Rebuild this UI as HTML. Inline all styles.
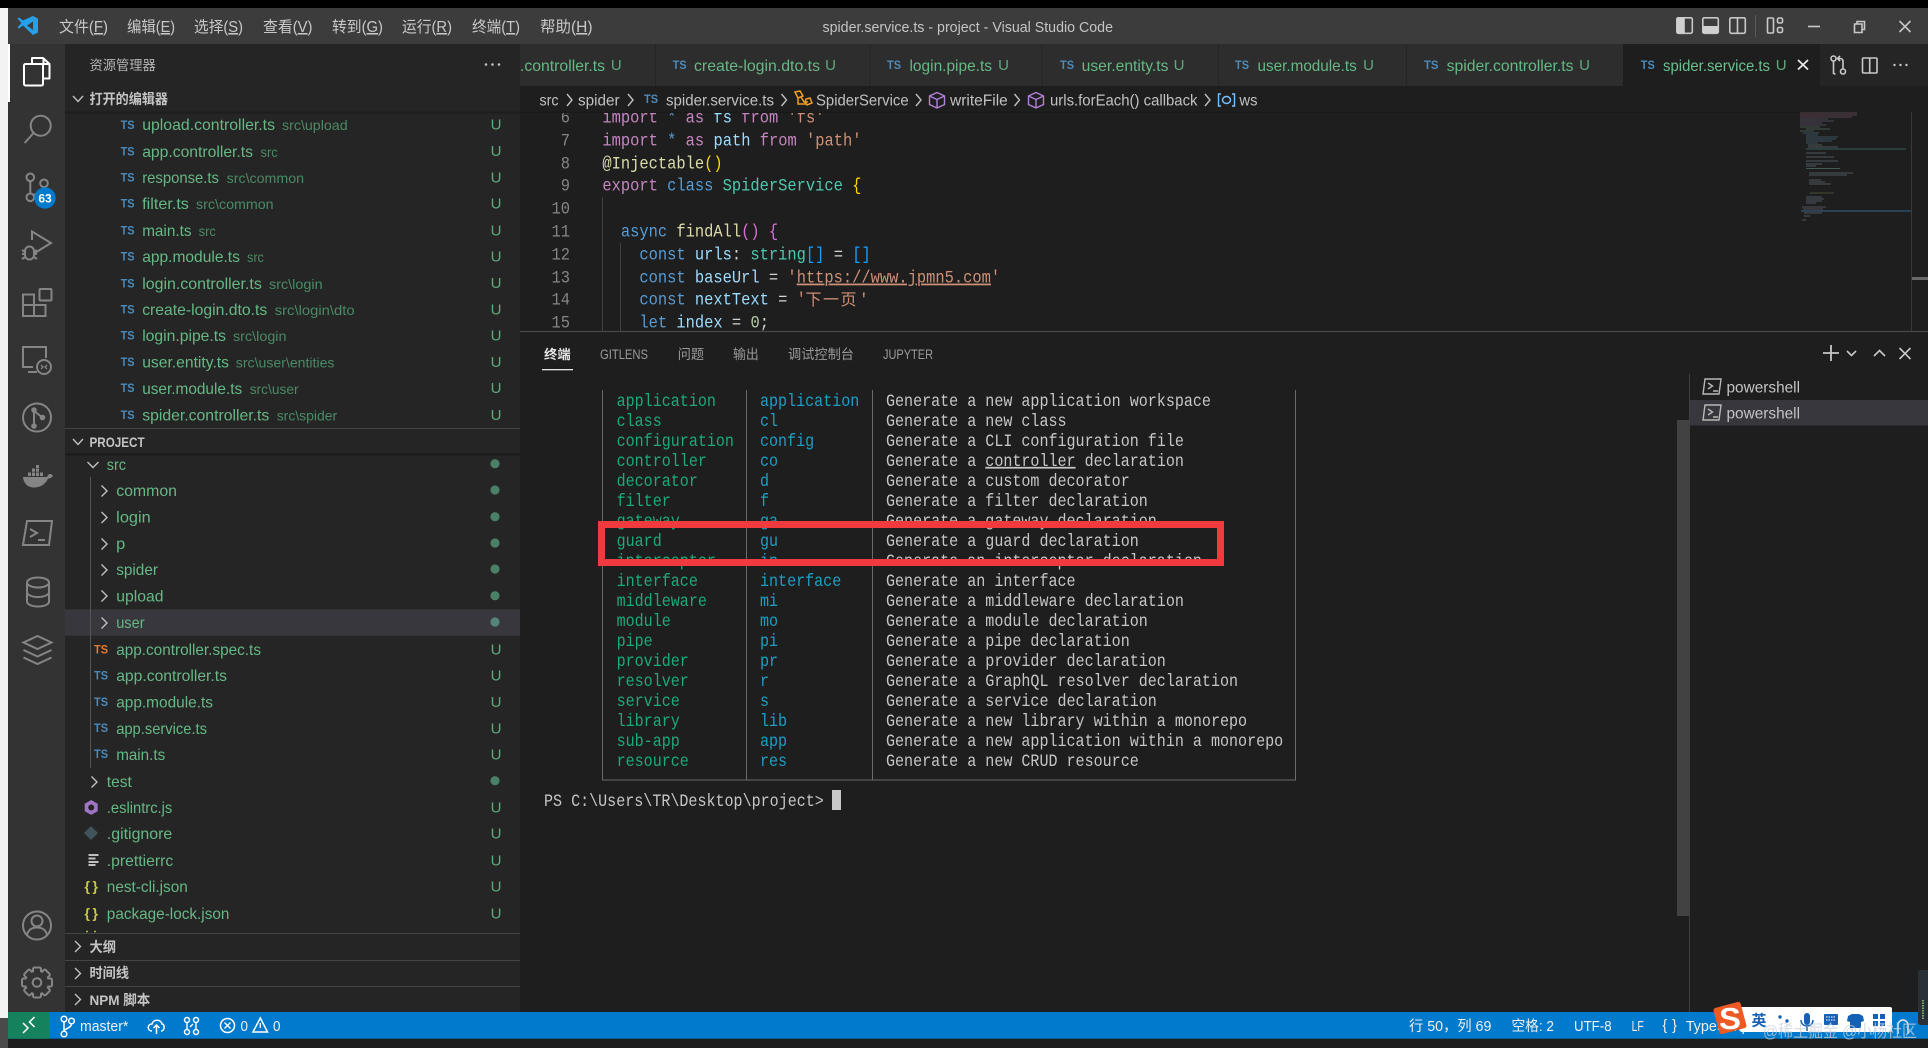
<!DOCTYPE html>
<html lang="zh-CN"><head><meta charset="utf-8"><title>spider.service.ts - project - Visual Studio Code</title>
<style>
html,body{margin:0;padding:0;background:#1e1e1e;width:1928px;height:1048px;overflow:hidden}
svg{display:block;filter:blur(.3px)}
text{white-space:pre;font-family:"Liberation Sans","Noto Sans CJK SC",sans-serif}
.m{font-size:15.5px;fill:#c8c8c8}
.n{font-size:16px;fill:#66b884}
.t{font-size:16px;fill:#66b884}
.p{font-size:14px;fill:#4a8a64}
.u{font-size:15px;fill:#5fa97d;text-anchor:middle}
.ts{font-size:11.5px;font-weight:700;fill:#4d8ab8}
.h{font-size:14px;font-weight:700;fill:#c4c4c4}
.b{font-size:15.5px;fill:#c0c0c0}
.pt{font-size:13.5px;fill:#9a9a9a}
.s{font-size:14.5px;fill:#f0f0f0}
.c text{font-family:"Liberation Mono","Noto Sans CJK SC",monospace;font-size:17.5px}
.g{fill:#1aab78}.y{fill:#1c9fc6}.d{fill:#c6c6c6}
.pu{fill:#c586c0}.bl{fill:#569cd6}.lb{fill:#9cdcfe}.or{fill:#ce9178}.ye{fill:#dcdcaa}.te{fill:#4ec9b0}.wh{fill:#d4d4d4}
.gd{fill:#ffd700}.vi{fill:#da70d6}.br{fill:#179fff}.nu{fill:#b5cea8}.ln{fill:#858585}
.i{fill:none;stroke:#858585;stroke-width:2}
.ch{fill:none;stroke:#c0c0c0;stroke-width:1.4}
.w{fill:none;stroke:#c8c8c8;stroke-width:1.6}
</style></head><body>
<svg xmlns="http://www.w3.org/2000/svg" width="1928" height="1048" viewBox="0 0 1928 1048">
<!-- base -->
<rect width="1928" height="1048" fill="#1e1e1e"/>
<rect x="0" y="0" width="8" height="1018" fill="#f3f3f3"/>
<rect x="0" y="1018" width="8" height="30" fill="#4a4a4a"/>
<rect width="1928" height="8" fill="#000"/>
<rect x="8" y="8" width="1920" height="36" fill="#3c3c3c"/>
<rect x="8" y="44" width="57" height="968" fill="#333"/>
<rect x="65" y="44" width="455" height="968" fill="#252526"/>
<rect x="8" y="44" width="2" height="58" fill="#fff"/>

<!-- title bar -->
<path fill="#23a0ee" d="M33 16l5 2.500v14l-5 2.500-10-9.500-4 3-1.500-1 4-4.500-4-4.500 1.500-1 4 3z"/>
<path fill="#3c3c3c" d="M33 21.500l-6 4 6 4.500z"/>
<text class="m" x="59" y="32" textLength="49" lengthAdjust="spacingAndGlyphs">文件(<tspan text-decoration="underline">F</tspan>)</text>
<text class="m" x="127" y="32" textLength="48" lengthAdjust="spacingAndGlyphs">编辑(<tspan text-decoration="underline">E</tspan>)</text>
<text class="m" x="194" y="32" textLength="49" lengthAdjust="spacingAndGlyphs">选择(<tspan text-decoration="underline">S</tspan>)</text>
<text class="m" x="263" y="32" textLength="49.500" lengthAdjust="spacingAndGlyphs">查看(<tspan text-decoration="underline">V</tspan>)</text>
<text class="m" x="332" y="32" textLength="51" lengthAdjust="spacingAndGlyphs">转到(<tspan text-decoration="underline">G</tspan>)</text>
<text class="m" x="402" y="32" textLength="50" lengthAdjust="spacingAndGlyphs">运行(<tspan text-decoration="underline">R</tspan>)</text>
<text class="m" x="472" y="32" textLength="48" lengthAdjust="spacingAndGlyphs">终端(<tspan text-decoration="underline">T</tspan>)</text>
<text class="m" x="540" y="32" textLength="52.500" lengthAdjust="spacingAndGlyphs">帮助(<tspan text-decoration="underline">H</tspan>)</text>
<text x="822.500" y="32" textLength="290.500" lengthAdjust="spacingAndGlyphs" style="font-size:14.500px;fill:#c4c4c4">spider.service.ts - project - Visual Studio Code</text>
<rect x="1676.800" y="17.800" width="15.500" height="15.500" rx="1.500" class="w"/><rect x="1676.800" y="17.800" width="8" height="15.500" fill="#d0d0d0"/>
<rect x="1702.800" y="17.800" width="15.500" height="15.500" rx="1.500" class="w"/><rect x="1702.800" y="26" width="15.500" height="7.300" fill="#d0d0d0"/>
<rect x="1729.800" y="17.800" width="15.500" height="15.500" rx="1.500" class="w"/><path d="M1737.500 18v15" class="w"/>
<path d="M1755.500 15v22" stroke="#5a5a5a" stroke-width="1"/>
<rect x="1767.500" y="18" width="6" height="15" rx="1" class="w"/><rect x="1777.500" y="18" width="5" height="5" rx="1.500" class="w"/><rect x="1777.500" y="27.500" width="5" height="5" rx="1.500" class="w"/>
<path d="M1808 26.500h12" class="w"/>
<path d="M1857 24v-2.500h7.500v8h-2.500M1854.500 24h7.500v8.500h-7.500z" class="w"/>
<path d="M1899.500 21l11 11M1910.500 21l-11 11" class="w"/>

<!-- activity bar icons -->
<g fill="none" stroke="#fff" stroke-width="2" stroke-linejoin="round">
<path d="M32 64v-6h11l6.500 6v14.500H43"/><path d="M43.500 58v6h6"/><rect x="24" y="64" width="19" height="21.500" rx="1.500"/>
</g>
<circle cx="40.700" cy="125.700" r="10" class="i"/><path d="M33.500 133L24.700 143" class="i"/>
<circle cx="30.300" cy="177.300" r="3.800" class="i"/><circle cx="44" cy="183.300" r="3.800" class="i"/><circle cx="30.300" cy="197.300" r="3.800" class="i"/>
<path d="M30.300 181v12.500M44 187c0 4-6 6-10.500 8" class="i"/>
<circle cx="45" cy="198" r="10.700" fill="#007acc"/>
<text x="45" y="202.500" text-anchor="middle" style="font-size:12px;font-weight:700;fill:#fff">63</text>
<path d="M32 240v-8.500l19 11.500-17 10.500" class="i"/>
<path d="M25 251a4.500 4.500 0 0 1 9 0v4a4.500 4.500 0 0 1-9 0zM22 250l3 2M37 250l-3 2M22 254h3M37 254h-3M22 259l3-2M37 259l-3-2" class="i" stroke-width="1.800"/>
<rect x="39.500" y="289" width="12" height="11.500" rx="1" class="i"/><path d="M34 294.500H23v21.500h22.500v-11H34zM34 305v11M23 305h11" class="i"/>
<path d="M46 358v-11H23v20h10M28 372h9" class="i"/><circle cx="44" cy="367" r="7" class="i"/><path d="M41 365l2 2-2 2M47 365l-2 2 2 2" stroke="#858585" fill="none" stroke-width="1.300"/>
<circle cx="37" cy="417.500" r="14" class="i"/><path d="M34 409v17M34 411l8.500 6.500" class="i"/><circle cx="34" cy="410" r="2.800" fill="#858585"/><circle cx="34" cy="426" r="2.800" fill="#858585"/><circle cx="42.500" cy="417.500" r="2.800" fill="#858585"/>
<path fill="#858585" d="M23 477h24c1-3 3-3.500 4.500-2.500l1.500 1c-1 2-2.500 3-5 3-2 5-7 9-14 9-7 0-10.500-5-11-10.500z"/>
<path fill="#858585" d="M28 472.500h3v3.500h-3zM32 472.500h3v3.500h-3zM36 472.500h3v3.500h-3zM40 472.500h3v3.500h-3zM36 468.500h3v3.200h-3zM32 468.500h3v3.200h-3zM36 465h3v3h-3z"/>
<path d="M27 521h25l-3 24H23z" class="i"/><path d="M30 529l7 4-7 4M38 540h7" class="i"/>
<ellipse cx="38" cy="582.500" rx="11" ry="5" class="i"/><path d="M27 582.500v19c0 3 5 5 11 5s11-2 11-5v-19M27 592c0 3 5 5 11 5s11-2 11-5" class="i"/>
<path d="M37.500 636l14 6.500-14 6.500-14-6.500zM23.500 650l14 6.500 14-6.500M23.500 657.500l14 6.500 14-6.500" class="i"/>
<circle cx="37" cy="925.500" r="14" class="i"/><circle cx="37" cy="921" r="5.500" class="i"/><path d="M27 935c1-5 5-7.500 10-7.500s9 2.500 10 7.500" class="i"/>
<g transform="translate(37 982.500)"><g fill="#333" stroke="#858585" stroke-width="2"><rect x="-4" y="-15" width="8" height="30" rx="1.500"/><rect x="-4" y="-15" width="8" height="30" rx="1.500" transform="rotate(45)"/><rect x="-4" y="-15" width="8" height="30" rx="1.500" transform="rotate(90)"/><rect x="-4" y="-15" width="8" height="30" rx="1.500" transform="rotate(135)"/></g><circle r="11" fill="#333"/><circle r="4.300" fill="none" stroke="#858585" stroke-width="2"/></g>

<!-- sidebar top -->
<text x="89.500" y="70" textLength="66.200" lengthAdjust="spacingAndGlyphs" style="font-size:13.500px;fill:#b4b4b4">资源管理器</text>
<circle cx="486" cy="64.500" r="1.300" fill="#c0c0c0"/><circle cx="492.500" cy="64.500" r="1.300" fill="#c0c0c0"/><circle cx="499" cy="64.500" r="1.300" fill="#c0c0c0"/>
<path class="ch" d="M73 96l5 5.500 5-5.500"/>
<text class="h" x="89.500" y="104" textLength="78.500" lengthAdjust="spacingAndGlyphs">打开的编辑器</text>
<rect x="65" y="111.500" width="455" height="2" fill="#1d1d1e"/>

<!-- open editors -->
<g>
<text class="ts" x="120.600" y="129" textLength="14" lengthAdjust="spacingAndGlyphs">TS</text><text class="n" x="142.200" y="130" textLength="132.800" lengthAdjust="spacingAndGlyphs">upload.controller.ts</text><text class="p" x="282" y="130" textLength="65.600" lengthAdjust="spacingAndGlyphs">src\upload</text><text class="u" x="496" y="129.500">U</text>
<text class="ts" x="120.600" y="155.500" textLength="14" lengthAdjust="spacingAndGlyphs">TS</text><text class="n" x="142.200" y="157" textLength="110.800" lengthAdjust="spacingAndGlyphs">app.controller.ts</text><text class="p" x="260.500" y="157" textLength="17.200" lengthAdjust="spacingAndGlyphs">src</text><text class="u" x="496" y="156">U</text>
<text class="ts" x="120.600" y="181.500" textLength="14" lengthAdjust="spacingAndGlyphs">TS</text><text class="n" x="142.200" y="183" textLength="76.800" lengthAdjust="spacingAndGlyphs">response.ts</text><text class="p" x="226.700" y="183" textLength="77.300" lengthAdjust="spacingAndGlyphs">src\common</text><text class="u" x="496" y="182.500">U</text>
<text class="ts" x="120.600" y="207.500" textLength="14" lengthAdjust="spacingAndGlyphs">TS</text><text class="n" x="142.200" y="209" textLength="46.700" lengthAdjust="spacingAndGlyphs">filter.ts</text><text class="p" x="196" y="209" textLength="77.600" lengthAdjust="spacingAndGlyphs">src\common</text><text class="u" x="496" y="208.500">U</text>
<text class="ts" x="120.600" y="234.500" textLength="14" lengthAdjust="spacingAndGlyphs">TS</text><text class="n" x="142.200" y="236" textLength="49.300" lengthAdjust="spacingAndGlyphs">main.ts</text><text class="p" x="198.600" y="236" textLength="17.300" lengthAdjust="spacingAndGlyphs">src</text><text class="u" x="496" y="235.500">U</text>
<text class="ts" x="120.600" y="260.500" textLength="14" lengthAdjust="spacingAndGlyphs">TS</text><text class="n" x="142.200" y="262" textLength="97.700" lengthAdjust="spacingAndGlyphs">app.module.ts</text><text class="p" x="247" y="262" textLength="16.900" lengthAdjust="spacingAndGlyphs">src</text><text class="u" x="496" y="261.500">U</text>
<text class="ts" x="120.600" y="287.500" textLength="14" lengthAdjust="spacingAndGlyphs">TS</text><text class="n" x="142.200" y="289" textLength="119.600" lengthAdjust="spacingAndGlyphs">login.controller.ts</text><text class="p" x="269" y="289" textLength="53.600" lengthAdjust="spacingAndGlyphs">src\login</text><text class="u" x="496" y="288">U</text>
<text class="ts" x="120.600" y="313.500" textLength="14" lengthAdjust="spacingAndGlyphs">TS</text><text class="n" x="142.200" y="315" textLength="125" lengthAdjust="spacingAndGlyphs">create-login.dto.ts</text><text class="p" x="274.700" y="315" textLength="80" lengthAdjust="spacingAndGlyphs">src\login\dto</text><text class="u" x="496" y="314.500">U</text>
<text class="ts" x="120.600" y="339.500" textLength="14" lengthAdjust="spacingAndGlyphs">TS</text><text class="n" x="142.200" y="341" textLength="83.800" lengthAdjust="spacingAndGlyphs">login.pipe.ts</text><text class="p" x="233" y="341" textLength="53.500" lengthAdjust="spacingAndGlyphs">src\login</text><text class="u" x="496" y="340.500">U</text>
<text class="ts" x="120.600" y="366" textLength="14" lengthAdjust="spacingAndGlyphs">TS</text><text class="n" x="142.200" y="367.500" textLength="86.800" lengthAdjust="spacingAndGlyphs">user.entity.ts</text><text class="p" x="235.800" y="367.500" textLength="98.700" lengthAdjust="spacingAndGlyphs">src\user\entities</text><text class="u" x="496" y="367">U</text>
<text class="ts" x="120.600" y="392" textLength="14" lengthAdjust="spacingAndGlyphs">TS</text><text class="n" x="142.200" y="394" textLength="100" lengthAdjust="spacingAndGlyphs">user.module.ts</text><text class="p" x="249.700" y="394" textLength="48.900" lengthAdjust="spacingAndGlyphs">src\user</text><text class="u" x="496" y="393">U</text>
<text class="ts" x="120.600" y="419" textLength="14" lengthAdjust="spacingAndGlyphs">TS</text><text class="n" x="142.200" y="420.500" textLength="127.100" lengthAdjust="spacingAndGlyphs">spider.controller.ts</text><text class="p" x="276.700" y="420.500" textLength="60.500" lengthAdjust="spacingAndGlyphs">src\spider</text><text class="u" x="496" y="420">U</text>
</g>

<!-- PROJECT section -->
<path d="M65 428.500h455" stroke="#444" stroke-width="1"/>
<path class="ch" d="M73 439l5 5.500 5-5.500"/>
<text class="h" x="89.500" y="447" textLength="55.100" lengthAdjust="spacingAndGlyphs">PROJECT</text>
<rect x="65" y="453.500" width="455" height="2" fill="#1a1a1b"/>
<rect x="65" y="609.300" width="455" height="26.400" fill="#37373d"/>
<path d="M90.500 476.700V768" stroke="#555" stroke-width="1"/>
<path class="ch" d="M87.500 462l5.500 5.500 5.500-5.500"/>
<text class="n" x="106.800" y="470" textLength="19.200" lengthAdjust="spacingAndGlyphs">src</text>
<g class="ch">
<path d="M101.500 485.500l5.500 5.500-5.500 5.500"/><path d="M101.500 512l5.500 5.500-5.500 5.500"/><path d="M101.500 538.500l5.500 5.500-5.500 5.500"/><path d="M101.500 564.500l5.500 5.500-5.500 5.500"/><path d="M101.500 590.500l5.500 5.500-5.500 5.500"/><path d="M101.500 617.500l5.500 5.500-5.500 5.500"/><path d="M91.500 776.500l5.500 5.500-5.500 5.500"/>
</g>
<text class="n" x="116.200" y="496" textLength="60.800" lengthAdjust="spacingAndGlyphs">common</text>
<text class="n" x="116.200" y="522.500" textLength="34.500" lengthAdjust="spacingAndGlyphs">login</text>
<text class="n" x="116.200" y="549" textLength="9.100" lengthAdjust="spacingAndGlyphs">p</text>
<text class="n" x="116.200" y="575" textLength="41.800" lengthAdjust="spacingAndGlyphs">spider</text>
<text class="n" x="116.200" y="601.500" textLength="47.300" lengthAdjust="spacingAndGlyphs">upload</text>
<text class="n" x="116.200" y="628" textLength="28.400" lengthAdjust="spacingAndGlyphs">user</text>
<g fill="#4a7f68"><circle cx="495" cy="463.700" r="4.600"/><circle cx="495" cy="490" r="4.600"/><circle cx="495" cy="516.700" r="4.600"/><circle cx="495" cy="543" r="4.600"/><circle cx="495" cy="569" r="4.600"/><circle cx="495" cy="595.700" r="4.600"/><circle cx="495" cy="622" r="4.600" fill="#55857a"/><circle cx="495" cy="780.700" r="4.600"/></g>
<text class="ts" x="94" y="653.500" textLength="14" lengthAdjust="spacingAndGlyphs" style="fill:#e37933">TS</text><text class="n" x="116.200" y="655" textLength="144.800" lengthAdjust="spacingAndGlyphs">app.controller.spec.ts</text><text class="u" x="496" y="654.500">U</text>
<text class="ts" x="94" y="679.500" textLength="14" lengthAdjust="spacingAndGlyphs">TS</text><text class="n" x="116.200" y="681" textLength="110.800" lengthAdjust="spacingAndGlyphs">app.controller.ts</text><text class="u" x="496" y="680.500">U</text>
<text class="ts" x="94" y="706" textLength="14" lengthAdjust="spacingAndGlyphs">TS</text><text class="n" x="116.200" y="707.500" textLength="96.800" lengthAdjust="spacingAndGlyphs">app.module.ts</text><text class="u" x="496" y="707">U</text>
<text class="ts" x="94" y="732" textLength="14" lengthAdjust="spacingAndGlyphs">TS</text><text class="n" x="116.200" y="734" textLength="90.800" lengthAdjust="spacingAndGlyphs">app.service.ts</text><text class="u" x="496" y="733.500">U</text>
<text class="ts" x="94" y="758" textLength="14" lengthAdjust="spacingAndGlyphs">TS</text><text class="n" x="116.200" y="760" textLength="49" lengthAdjust="spacingAndGlyphs">main.ts</text><text class="u" x="496" y="759.500">U</text>
<text class="n" x="106.800" y="787" textLength="25" lengthAdjust="spacingAndGlyphs">test</text>
<path d="M91.200 800l6.500 3.700v7.500l-6.500 3.700-6.500-3.700v-7.500z" fill="#a074c4"/><circle cx="91.200" cy="807.500" r="3" fill="#252526"/>
<text class="n" x="106.800" y="813" textLength="65.500" lengthAdjust="spacingAndGlyphs">.eslintrc.js</text><text class="u" x="496" y="812.500">U</text>
<path d="M91 826l7 7-7 7-7-7z" fill="#41535b"/>
<text class="n" x="106.800" y="839" textLength="65.500" lengthAdjust="spacingAndGlyphs">.gitignore</text><text class="u" x="496" y="838.500">U</text>
<path d="M88.500 855h10M88.500 858.500h7M88.500 862h10M88.500 865h7" stroke="#c0c0c0" stroke-width="2"/>
<text class="n" x="106.800" y="866" textLength="66.500" lengthAdjust="spacingAndGlyphs">.prettierrc</text><text class="u" x="496" y="865.500">U</text>
<text x="84.500" y="891" textLength="13.500" lengthAdjust="spacing" style="font-size:14px;font-weight:700;fill:#cbcb41">{}</text>
<text class="n" x="106.800" y="892" textLength="81" lengthAdjust="spacingAndGlyphs">nest-cli.json</text><text class="u" x="496" y="891.500">U</text>
<text x="84.500" y="918" textLength="13.500" lengthAdjust="spacing" style="font-size:14px;font-weight:700;fill:#cbcb41">{}</text>
<text class="n" x="106.800" y="919" textLength="122.600" lengthAdjust="spacingAndGlyphs">package-lock.json</text><text class="u" x="496" y="918.500">U</text>
<rect x="65" y="931" width="455" height="81" fill="#252526"/>
<path d="M86 931.500h2M94 931.500h2" stroke="#b5b53c" stroke-width="1.500"/>
<path d="M65 933.500h455M65 960.500h455M65 986.500h455" stroke="#444" stroke-width="1"/>
<path class="ch" d="M75 941l5.500 5.500-5.500 5.500"/><path class="ch" d="M75 968l5.500 5.500-5.500 5.500"/><path class="ch" d="M75 994l5.500 5.500-5.500 5.500"/>
<text class="h" x="89.500" y="952" textLength="26.500" lengthAdjust="spacingAndGlyphs">大纲</text>
<text class="h" x="89.500" y="978" textLength="39.500" lengthAdjust="spacingAndGlyphs">时间线</text>
<text class="h" x="89.500" y="1005" textLength="60.800" lengthAdjust="spacingAndGlyphs">NPM 脚本</text>

<!-- tabs -->
<rect x="520" y="44" width="1408" height="42" fill="#252526"/>
<rect x="520" y="44" width="135" height="42" fill="#2d2d2d"/>
<rect x="656" y="44" width="213.500" height="42" fill="#2d2d2d"/>
<rect x="870.500" y="44" width="171" height="42" fill="#2d2d2d"/>
<rect x="1042.500" y="44" width="175.500" height="42" fill="#2d2d2d"/>
<rect x="1219" y="44" width="187" height="42" fill="#2d2d2d"/>
<rect x="1407" y="44" width="216" height="42" fill="#2d2d2d"/>
<rect x="1623" y="44" width="197" height="42" fill="#1e1e1e"/>
<text class="t" x="520" y="71" textLength="85" lengthAdjust="spacingAndGlyphs">.controller.ts</text><text class="u" x="616.300" y="70">U</text>
<text class="ts" x="672.600" y="69" textLength="14" lengthAdjust="spacingAndGlyphs">TS</text><text class="t" x="694" y="71" textLength="126" lengthAdjust="spacingAndGlyphs">create-login.dto.ts</text><text class="u" x="830.500" y="70">U</text>
<text class="ts" x="887" y="69" textLength="14" lengthAdjust="spacingAndGlyphs">TS</text><text class="t" x="909.500" y="71" textLength="82.500" lengthAdjust="spacingAndGlyphs">login.pipe.ts</text><text class="u" x="1003.500" y="70">U</text>
<text class="ts" x="1060" y="69" textLength="14" lengthAdjust="spacingAndGlyphs">TS</text><text class="t" x="1081.600" y="71" textLength="86.900" lengthAdjust="spacingAndGlyphs">user.entity.ts</text><text class="u" x="1179" y="70">U</text>
<text class="ts" x="1235" y="69" textLength="14" lengthAdjust="spacingAndGlyphs">TS</text><text class="t" x="1257.500" y="71" textLength="99.300" lengthAdjust="spacingAndGlyphs">user.module.ts</text><text class="u" x="1368.500" y="70">U</text>
<text class="ts" x="1424" y="69" textLength="14.500" lengthAdjust="spacingAndGlyphs">TS</text><text class="t" x="1446.600" y="71" textLength="126.900" lengthAdjust="spacingAndGlyphs">spider.controller.ts</text><text class="u" x="1584.500" y="70">U</text>
<text class="ts" x="1640.800" y="69" textLength="14" lengthAdjust="spacingAndGlyphs">TS</text><text class="t" x="1663" y="71" textLength="107" lengthAdjust="spacingAndGlyphs" style="fill:#6cc08e">spider.service.ts</text><text class="u" x="1781.200" y="70">U</text>
<path d="M1798 60l10 9.500M1808 60l-10 9.500" stroke="#e8e8e8" stroke-width="1.800" fill="none"/>
<circle cx="1833.500" cy="58.500" r="2.500" class="w"/><circle cx="1843" cy="71.500" r="2.500" class="w"/><path d="M1833.500 61v13M1843 69V61.500c0-2-1-3-3-3h-2M1840 56l-2.500 2.500 2.500 2.500M1833.500 72.500c0 1 .7 1.500 2 1.500" class="w" stroke-width="1.400"/>
<rect x="1862.500" y="58" width="14.500" height="15" rx="1" class="w"/><path d="M1869.700 58v15" class="w"/>
<circle cx="1894.500" cy="65" r="1.200" fill="#c8c8c8"/><circle cx="1900.500" cy="65" r="1.200" fill="#c8c8c8"/><circle cx="1906.500" cy="65" r="1.200" fill="#c8c8c8"/>

<!-- editor code -->
<path d="M602.500 197v134.500M620.500 243v88.500" stroke="#404040" stroke-width="1"/>
<g class="c">
<g transform="translate(570 .5) scale(.881 1)" text-anchor="end">
<text class="ln" y="122">6</text><text class="ln" y="145">7</text><text class="ln" y="168">8</text><text class="ln" y="190">9</text><text class="ln" y="213">10</text><text class="ln" y="236">11</text><text class="ln" y="259">12</text><text class="ln" y="282">13</text><text class="ln" y="304">14</text><text class="ln" y="327">15</text>
</g>
<g transform="translate(602.400 .5) scale(.881 1)">
<text y="122"><tspan class="pu">import</tspan> <tspan class="bl">*</tspan> <tspan class="pu">as</tspan> <tspan class="lb">fs</tspan> <tspan class="pu">from</tspan> <tspan class="or">'fs'</tspan></text>
<text y="145"><tspan class="pu">import</tspan> <tspan class="bl">*</tspan> <tspan class="pu">as</tspan> <tspan class="lb">path</tspan> <tspan class="pu">from</tspan> <tspan class="or">'path'</tspan></text>
<text y="168"><tspan class="ye">@Injectable</tspan><tspan class="gd">()</tspan></text>
<text y="190"><tspan class="pu">export</tspan> <tspan class="bl">class</tspan> <tspan class="te">SpiderService</tspan> <tspan class="gd">{</tspan></text>
<text y="236">  <tspan class="bl">async</tspan> <tspan class="ye">findAll</tspan><tspan class="vi">()</tspan> <tspan class="vi">{</tspan></text>
<text y="259">    <tspan class="bl">const</tspan> <tspan class="lb">urls</tspan><tspan class="wh">:</tspan> <tspan class="te">string</tspan><tspan class="br">[]</tspan> <tspan class="wh">=</tspan> <tspan class="br">[]</tspan></text>
<text y="282">    <tspan class="bl">const</tspan> <tspan class="lb">baseUrl</tspan> <tspan class="wh">=</tspan> <tspan class="or">'</tspan><tspan class="or" text-decoration="underline">https://www.jpmn5.com</tspan><tspan class="or">'</tspan></text>
<text y="304">    <tspan class="bl">const</tspan> <tspan class="lb">nextText</tspan> <tspan class="wh">=</tspan> <tspan class="or">'</tspan></text>
<text y="327">    <tspan class="bl">let</tspan> <tspan class="lb">index</tspan> <tspan class="wh">=</tspan> <tspan class="nu">0</tspan><tspan class="wh">;</tspan></text>
</g>
</g>
<text x="805.500" y="305" style="font-size:16px;fill:#ce9178;font-family:'Noto Sans CJK SC',sans-serif" textLength="51" lengthAdjust="spacing">下一页</text>
<text x="859" y="304" style="font-size:16px;fill:#ce9178;font-family:'Liberation Mono',monospace">'</text>

<!-- breadcrumb -->
<rect x="520" y="86" width="1408" height="26" fill="#1e1e1e"/>
<rect x="520" y="111.500" width="1292" height="1.500" fill="#191919"/>
<text class="b" x="539.500" y="105.500" textLength="19" lengthAdjust="spacingAndGlyphs">src</text>
<path class="ch" d="M567 94l5 6-5 6M628 94l5 6-5 6M781.500 94l5 6-5 6M916 94l5 6-5 6M1014.500 94l5 6-5 6M1205 94l5 6-5 6"/>
<text class="b" x="578" y="105.500" textLength="41.600" lengthAdjust="spacingAndGlyphs">spider</text>
<text class="ts" x="644" y="103" textLength="14" lengthAdjust="spacingAndGlyphs">TS</text>
<text class="b" x="666" y="105.500" textLength="108" lengthAdjust="spacingAndGlyphs">spider.service.ts</text>
<path d="M795 92l5-1 3 5-5 2zM806 99l4-1 2 5-5 2-2-3zM801 97l3 5h4M798 98v6h9" fill="none" stroke="#ee9d28" stroke-width="1.500"/>
<text class="b" x="816" y="105.500" textLength="92.600" lengthAdjust="spacingAndGlyphs">SpiderService</text>
<path d="M937 92.500l7.500 3.500v8.500l-7.500 3.500-7.500-3.500V96zM929.500 96l7.500 3.500 7.500-3.500M937 99.500V108" fill="none" stroke="#b180d7" stroke-width="1.400"/>
<text class="b" x="950" y="105.500" textLength="57.800" lengthAdjust="spacingAndGlyphs">writeFile</text>
<path d="M1036 92.500l7.500 3.500v8.500l-7.500 3.500-7.500-3.500V96zM1028.500 96l7.500 3.500 7.500-3.500M1036 99.500V108" fill="none" stroke="#b180d7" stroke-width="1.400"/>
<text class="b" x="1050" y="105.500" textLength="147.500" lengthAdjust="spacingAndGlyphs">urls.forEach() callback</text>
<path d="M1221 94h-2.500v12h2.500M1232 94h2.500v12H1232" fill="none" stroke="#75beff" stroke-width="1.400"/><ellipse cx="1226.500" cy="100" rx="4" ry="3.500" fill="none" stroke="#75beff" stroke-width="1.500"/>
<text class="b" x="1239.400" y="105.500" textLength="18.100" lengthAdjust="spacingAndGlyphs">ws</text>

<!-- minimap -->
<g stroke-width=".8" fill="none" opacity=".6">
<path d="M1800 113h57M1800 115h57M1800 117h52" stroke="#9a6a80"/>
<path d="M1800 119h28M1800 121h34M1800 123h22M1800 125h26" stroke="#8a7a9a"/>
<path d="M1800 127h20M1806 129h24M1800 131h14" stroke="#7a9a8a"/>
<path d="M1803 133h16M1806 135h12M1806 137h32M1806 139h30M1806 141h26M1806 143h12" stroke="#5f90b0"/>
<path d="M1808 145h14M1808 147h30" stroke="#8aa0a8"/>
<path d="M1806 149h100" stroke="#5fa8b0"/>
<path d="M1806 153h20M1806 157h28M1806 161h32M1806 164h16M1806 166h10" stroke="#7d9cab"/>
<path d="M1806 168.500h34" stroke="#6aa88e"/>
<path d="M1809 173h44M1809 175h38M1809 180h12M1809 182h16M1809 184h22" stroke="#8a9aa8"/>
<path d="M1810 193h24" stroke="#7a8a5a"/>
<path d="M1806 197h16M1806 199h18M1806 201h16M1806 203h10" stroke="#7d9cab"/>
<path d="M1802 207h24M1803 209h20" stroke="#8a8aa0"/>
<path d="M1801 211h110" stroke="#3f7fb0" stroke-width="1.200"/>
<path d="M1804 213h18M1804 216h6M1802 220h4" stroke="#8a9aa8"/>
</g>
<path d="M1911.500 112v219" stroke="#3a3a3a" stroke-width="1"/>
<rect x="1912" y="277" width="16" height="3" fill="#6a6a6a"/>

<!-- panel -->
<rect x="520" y="332" width="1408" height="680" fill="#1e1e1e"/>
<path d="M520 331.500h1408" stroke="#474747" stroke-width="1.200"/>
<text x="544" y="359" textLength="26.700" lengthAdjust="spacingAndGlyphs" style="font-size:13px;font-weight:700;fill:#e6e6e6">终端</text>
<rect x="542" y="369" width="31" height="1.300" fill="#e6e6e6"/>
<text class="pt" x="600" y="359" textLength="48" lengthAdjust="spacingAndGlyphs">GITLENS</text>
<text class="pt" x="677.700" y="359" textLength="26.300" lengthAdjust="spacingAndGlyphs">问题</text>
<text class="pt" x="733" y="359" textLength="25.700" lengthAdjust="spacingAndGlyphs">输出</text>
<text class="pt" x="788" y="359" textLength="66" lengthAdjust="spacingAndGlyphs">调试控制台</text>
<text class="pt" x="883" y="359" textLength="50" lengthAdjust="spacingAndGlyphs">JUPYTER</text>
<path d="M1823 353h16M1831 345v16" stroke="#c8c8c8" stroke-width="1.800" fill="none"/>
<path d="M1847 351l4.500 4.500 4.500-4.500M1874 356l5.500-5.500 5.500 5.500M1899.500 348l11 11M1910.500 348l-11 11" class="w"/>

<!-- terminal table -->
<path d="M602.500 390v390h693V390M746.500 390v390M872.500 390v390" fill="none" stroke="#6a6a6a" stroke-width="1"/>
<g class="c">
<g transform="translate(616.600 .8) scale(.86 1)" class="g">
<text y="405">application</text><text y="425">class</text><text y="445">configuration</text><text y="465">controller</text><text y="485">decorator</text><text y="505">filter</text><text y="525">gateway</text><text y="545">guard</text><text y="565">interceptor</text><text y="585">interface</text><text y="605">middleware</text><text y="625">module</text><text y="645">pipe</text><text y="665">provider</text><text y="685">resolver</text><text y="705">service</text><text y="725">library</text><text y="745">sub-app</text><text y="765">resource</text>
</g>
<g transform="translate(760 .8) scale(.86 1)" class="y">
<text y="405">application</text><text y="425">cl</text><text y="445">config</text><text y="465">co</text><text y="485">d</text><text y="505">f</text><text y="525">ga</text><text y="545">gu</text><text y="565">in</text><text y="585">interface</text><text y="605">mi</text><text y="625">mo</text><text y="645">pi</text><text y="665">pr</text><text y="685">r</text><text y="705">s</text><text y="725">lib</text><text y="745">app</text><text y="765">res</text>
</g>
<g transform="translate(886 .8) scale(.86 1)" class="d">
<text y="405">Generate a new application workspace</text><text y="425">Generate a new class</text><text y="445">Generate a CLI configuration file</text><text y="465">Generate a <tspan text-decoration="underline">controller</tspan> declaration</text><text y="485">Generate a custom decorator</text><text y="505">Generate a filter declaration</text><text y="525">Generate a gateway declaration</text><text y="545">Generate a guard declaration</text><text y="565">Generate an interceptor declaration</text><text y="585">Generate an interface</text><text y="605">Generate a middleware declaration</text><text y="625">Generate a module declaration</text><text y="645">Generate a pipe declaration</text><text y="665">Generate a provider declaration</text><text y="685">Generate a GraphQL resolver declaration</text><text y="705">Generate a service declaration</text><text y="725">Generate a new library within a monorepo</text><text y="745">Generate a new application within a monorepo</text><text y="765">Generate a new CRUD resource</text>
</g>
<g transform="translate(544 .5) scale(.86 1)" class="d"><text y="805.500">PS C:\Users\TR\Desktop\project&gt;</text></g>
</g>
<rect x="832" y="790" width="9" height="20" fill="#c8c8c8"/>
<rect x="601.500" y="524.500" width="619" height="38" fill="none" stroke="#f03a3e" stroke-width="7"/>

<!-- terminal scrollbar + list -->
<rect x="1677" y="420" width="12" height="496" fill="#424242"/>
<path d="M1689.500 374v638" stroke="#3f3f3f" stroke-width="1"/>
<rect x="1690" y="400" width="238" height="25.500" fill="#37373d"/>
<path d="M1705 379h16l-2 15h-16zM1708 383l4.500 3-4.500 3M1713 391h5" fill="none" stroke="#b8b8b8" stroke-width="1.400"/>
<path d="M1705 405h16l-2 15h-16zM1708 409l4.500 3-4.500 3M1713 417h5" fill="none" stroke="#b8b8b8" stroke-width="1.400"/>
<text x="1726.500" y="392.500" textLength="73.500" lengthAdjust="spacingAndGlyphs" style="font-size:16px;fill:#c4c4c4">powershell</text>
<text x="1726.500" y="418.500" textLength="73.500" lengthAdjust="spacingAndGlyphs" style="font-size:16px;fill:#c4c4c4">powershell</text>

<!-- status bar -->
<rect x="8" y="1012" width="1920" height="26.700" fill="#007acc"/>
<rect x="8" y="1012" width="41" height="26.700" fill="#16825d"/>
<path d="M23 1023l5 5-5 5M34.500 1017l-5 5 5 5" fill="none" stroke="#fff" stroke-width="1.500"/>
<circle cx="64" cy="1019" r="2.800" fill="none" stroke="#fff" stroke-width="1.500"/><circle cx="64" cy="1034" r="2.800" fill="none" stroke="#fff" stroke-width="1.500"/><circle cx="71.500" cy="1021" r="2.800" fill="none" stroke="#fff" stroke-width="1.500"/><path d="M64 1022v9M71.500 1024c0 3-4 4-7 6" fill="none" stroke="#fff" stroke-width="1.500"/>
<text class="s" x="80" y="1031" textLength="48.400" lengthAdjust="spacingAndGlyphs">master*</text>
<path d="M152 1031c-5 0-5-7 0-7 1-5 9-5 10 0 3 0 3 7-1 7M156.500 1034v-9M153.500 1028l3-3 3 3" fill="none" stroke="#fff" stroke-width="1.500"/>
<circle cx="187" cy="1020" r="2.500" fill="none" stroke="#fff" stroke-width="1.500"/><circle cx="187" cy="1032" r="2.500" fill="none" stroke="#fff" stroke-width="1.500"/><circle cx="196" cy="1020" r="2.500" fill="none" stroke="#fff" stroke-width="1.500"/><circle cx="196" cy="1032" r="2.500" fill="none" stroke="#fff" stroke-width="1.500"/><path d="M187 1022.500v7M196 1022.500v7M190 1027l3-3" fill="none" stroke="#fff" stroke-width="1.400"/>
<circle cx="227.500" cy="1025.500" r="7" fill="none" stroke="#fff" stroke-width="1.500"/><path d="M224.500 1022.500l6 6M230.500 1022.500l-6 6" stroke="#fff" stroke-width="1.400"/>
<text class="s" x="240.500" y="1031" textLength="7.500" lengthAdjust="spacingAndGlyphs">0</text>
<path d="M260.300 1018l7.200 14h-14.500z" fill="none" stroke="#fff" stroke-width="1.500"/><path d="M260.300 1023v5" stroke="#fff" stroke-width="1.300"/>
<text class="s" x="273" y="1031" textLength="7.500" lengthAdjust="spacingAndGlyphs">0</text>
<text class="s" x="1409" y="1031" textLength="82.400" lengthAdjust="spacingAndGlyphs">行 50，列 69</text>
<text class="s" x="1511.500" y="1031" textLength="42.500" lengthAdjust="spacingAndGlyphs">空格: 2</text>
<text class="s" x="1574" y="1031" textLength="37.600" lengthAdjust="spacingAndGlyphs">UTF-8</text>
<text class="s" x="1631.600" y="1031" textLength="12" lengthAdjust="spacingAndGlyphs">LF</text>
<text class="s" x="1662.400" y="1030" textLength="14.600" lengthAdjust="spacing">{}</text>
<text class="s" x="1685.700" y="1031" textLength="68" lengthAdjust="spacingAndGlyphs">TypeScript</text>
<path d="M1898 1034v-9a5 5 0 0 1 10 0v9" fill="none" stroke="#e8e8e8" stroke-width="1.400"/>

<!-- sogou toolbar -->
<rect x="1740" y="1007" width="152" height="25" rx="2" fill="#fff"/>
<rect x="1716" y="1004.500" width="28" height="27" rx="2.500" fill="#ee5a24" transform="rotate(-15 1730 1018)"/>
<text x="1730" y="1029" text-anchor="middle" textLength="22" lengthAdjust="spacingAndGlyphs" style="font-size:31px;font-weight:700;fill:#fff">S</text>
<text x="1751.500" y="1025.500" textLength="15" lengthAdjust="spacingAndGlyphs" style="font-size:15px;font-weight:700;fill:#1561b5">英</text>
<circle cx="1780" cy="1017" r="1.700" fill="#1561b5"/><circle cx="1787" cy="1021" r="1.700" fill="#1561b5"/>
<rect x="1804" y="1013" width="6" height="12" rx="3" fill="#1561b5"/><path d="M1801 1020c0 8 12 8 12 0M1807 1027v4" fill="none" stroke="#1561b5" stroke-width="1.500"/>
<rect x="1824" y="1014" width="14" height="11" rx="1" fill="#1561b5"/><path d="M1826 1017h10M1826 1020h10" stroke="#fff" stroke-width="1" stroke-dasharray="1.500 1"/>
<path d="M1848 1016l4-2h7l4 2 1 5-3 1v6h-11v-6l-3-1z" fill="#1561b5"/>
<path d="M1873 1014h5v5h-5zM1880 1014h5v5h-5zM1873 1021h5v5h-5zM1880 1021h5v5h-5z" fill="#1561b5"/>
<text x="1763" y="1037" textLength="154" lengthAdjust="spacingAndGlyphs" style="font-size:17px;fill:#c8d2dc;fill-opacity:.75">@稀土掘金 @小杨社区</text>

<!-- right corner widget -->
<rect x="1918" y="970" width="14" height="55" rx="3" fill="#2a3038"/>
<path d="M1923 1000v20" stroke="#8fd36a" stroke-width="1.500" stroke-dasharray="1.500 1"/>
</svg>
</body></html>
